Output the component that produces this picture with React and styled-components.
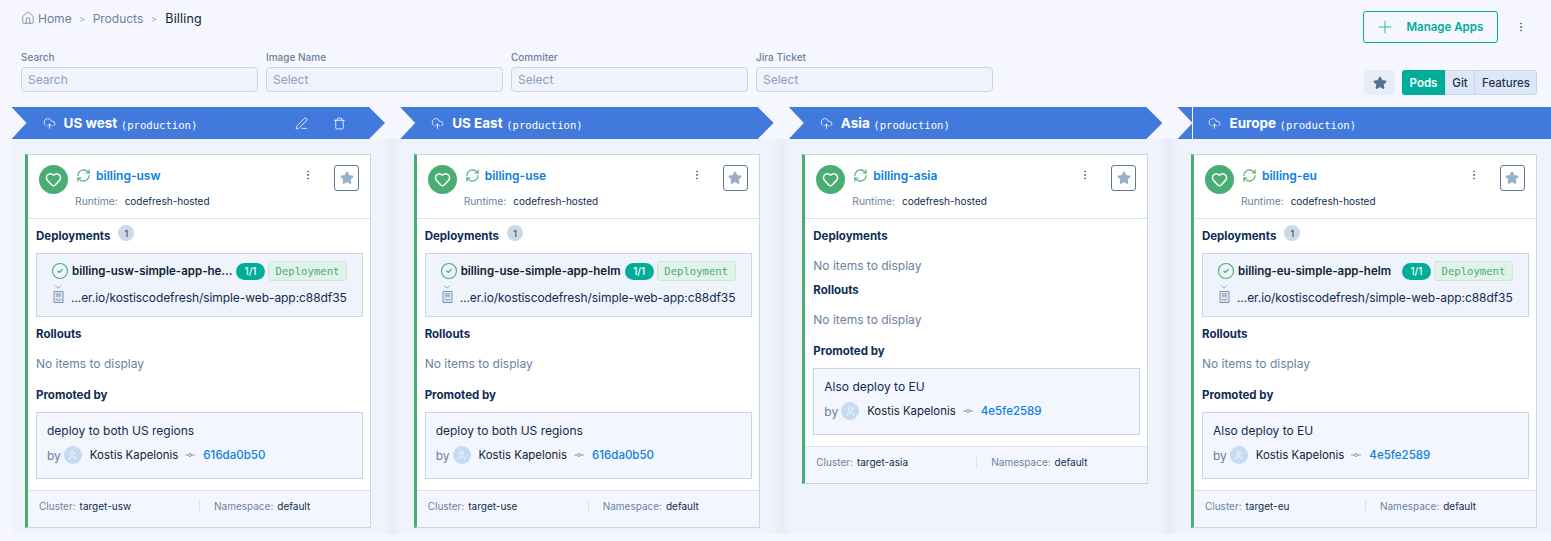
import { Fragment } from "react";
import styled, { createGlobalStyle } from "styled-components";
import {
  ChevronDown,
  CircleCheck,
  CloudUpload,
  EllipsisVertical,
  GitCommitHorizontal,
  Heart,
  House,
  PenLine,
  Plus,
  RefreshCw,
  Star,
  Trash,
  User,
} from "lucide-react";

const GlobalStyle = createGlobalStyle`
  * {
    box-sizing: border-box;
  }
  html, body {
    margin: 0;
    padding: 0;
    background: #ffffff;
    overflow: hidden;
  }
  body {
    font-family: Inter, "Noto Sans", "Liberation Sans", sans-serif;
    font-size: 12px;
    color: #0f2b4f;
  }
`;

const Page = styled.div`
  width: 1551px;
  height: 541px;
  overflow: hidden;
  background: #f6f7fe;
`;

const Top = styled.div`
  margin-left: 8px;
  height: 97px;
  padding: 0 14px 2px 13px;
  background: #f6f7fe;
`;

const TopBar = styled.div`
  display: flex;
  justify-content: space-between;
  align-items: flex-start;
  height: 43px;
`;

const Crumbs = styled.div`
  display: flex;
  align-items: center;
  height: 20px;
  margin-top: 8px;
  color: #5f7591;
`;

const Crumb = styled.span`
  color: ${(props) => (props.$current ? "#0f2238" : "#6b829e")};
  font-size: ${(props) => (props.$current ? 12.5 : 12)}px;
  letter-spacing: ${(props) => (props.$current ? 0.2 : 0)}px;
  margin-left: ${(props) => (props.$first ? 3 : props.$current ? 1 : 0)}px;
`;

const CrumbSep = styled.span`
  width: 21px;
  text-align: center;
  font-size: 9px;
  color: #9aabc0;
`;

const TopActions = styled.div`
  display: flex;
  align-items: center;
  margin-top: 11px;
`;

const ManageButton = styled.button`
  display: flex;
  align-items: center;
  width: 135px;
  height: 32px;
  padding: 0 0 0 10.5px;
  background: transparent;
  border: 1.5px solid #00ad98;
  border-radius: 3px;
  color: #00ad98;
  font: 600 11.5px Inter, sans-serif;

  span {
    margin-left: 12px;
  }
`;

const DotsButton = styled.div`
  display: flex;
  width: 12px;
  justify-content: center;
  color: #4d617c;
`;

const TopDots = styled(DotsButton)`
  margin: 0 10px 0 17px;
`;

const FilterRow = styled.div`
  display: flex;
  justify-content: space-between;
  align-items: flex-end;
  margin-top: 8px;
`;

const Filters = styled.div`
  display: flex;
  gap: 8px;
  margin-bottom: 3px;
`;

const Field = styled.label`
  display: block;
  width: 237px;
`;

const FieldLabel = styled.div`
  height: 13px;
  line-height: 13px;
  margin-bottom: 3px;
  font-size: 10px;
  font-weight: 500;
  color: #6b829e;
`;

const FieldInput = styled.div`
  height: 25px;
  line-height: 23px;
  padding-left: 6px;
  background: #eef3fd;
  border: 1px solid #c9d5e8;
  border-radius: 4px;
  color: #8ea0b8;
`;

const ViewControls = styled.div`
  display: flex;
`;

const StarToggle = styled.div`
  display: flex;
  align-items: center;
  justify-content: center;
  width: 31px;
  height: 25px;
  margin-right: 7px;
  background: #e8eef8;
  border-radius: 3px;
  color: #55708f;
`;

const Segments = styled.div`
  display: flex;
  height: 25px;
  border-radius: 3px;
  overflow: hidden;
  background: #dde7f5;
  box-shadow: inset 0 0 0 1px #ccd8ea;
`;

const Segment = styled.div`
  display: flex;
  align-items: center;
  justify-content: center;
  width: ${(props) => props.$width}px;
  font-size: 11.5px;
  font-weight: ${(props) => (props.$active ? 600 : 500)};
  color: ${(props) => (props.$active ? "#ffffff" : "#1f3450")};
  background: ${(props) => (props.$active ? "#00ad98" : "transparent")};
  & + & {
    border-left: 1px solid #ccd8ea;
  }
`;

const Board = styled.div`
  display: flex;
  margin: 10px 0 0 11.5px;
  height: 427px;
`;

const Column = styled.section`
  flex: ${(props) => (props.$last ? "1" : "none")};
  width: 373.5px;
`;

const Gutter = styled.div`
  flex: none;
  width: 15.17px;
  margin-top: 32px;
  background: linear-gradient(90deg, #eef1fa, #e9ecf6 50%, #eef1fa);
`;

const Band = styled.header`
  position: relative;
  display: flex;
  align-items: center;
  height: 32px;
  padding: 0 39px 0 31px;
  background: #417adc;
  color: #ffffff;
  clip-path: ${(props) =>
    props.$last
      ? "polygon(0 0, 100% 0, 100% 100%, 0 100%, 15px 50%)"
      : "polygon(0 0, calc(100% - 16px) 0, 100% 50%, calc(100% - 16px) 100%, 0 100%, 15px 50%)"};

  ${(props) =>
    props.$last &&
    `
    &::before {
      content: "";
      position: absolute;
      left: 15px;
      top: 0;
      bottom: 0;
      width: 1px;
      background: #f6f7fe;
    }
  `}
`;

const BandTitle = styled.strong`
  margin-left: 8px;
  font-size: 13.5px;
  font-weight: 700;
`;

const BandEnv = styled.span`
  margin: 3px 0 0 3.5px;
  font-family: "DejaVu Sans Mono", "Liberation Mono", monospace;
  font-size: 10.6px;
`;

const BandActions = styled.div`
  display: flex;
  gap: 25px;
  margin-left: auto;
`;

const ColumnBody = styled.div`
  height: 395px;
  padding: 15px 14px 0 13.5px;
  background: #eff3fc;
`;

const Card = styled.article`
  width: 346px;
  background: #ffffff;
  border: 1px solid #c9d5e8;
  border-left: 3px solid #4aae74;
`;

const CardHead = styled.div`
  display: flex;
  height: 64px;
  padding: 10px 11px 0 11px;
  border-bottom: 1px solid #d9e2f0;
`;

const HealthIcon = styled.div`
  display: flex;
  flex: none;
  align-items: center;
  justify-content: center;
  width: 29px;
  height: 29px;
  border-radius: 50%;
  background: #4aae74;
  color: #ffffff;
`;

const AppInfo = styled.div`
  flex: 1;
  margin-left: 7px;
`;

const AppRow = styled.div`
  display: flex;
  align-items: center;
  height: 20px;
  margin-left: 1px;
  color: #4aae74;
`;

const AppName = styled.a`
  margin-left: 5px;
  font-weight: 600;
  color: #0b7fe0;
`;

const Meta = styled.div`
  margin-top: 9px;
  font-size: 10px;
  line-height: 14px;
`;

const MetaKey = styled.span`
  color: #6b829e;
  font-size: 10.3px;
  margin-right: 7px;
`;

const FootKey = styled(MetaKey)`
  font-size: 10px;
  margin-right: 4px;
`;

const CardDots = styled(DotsButton)`
  margin: 4px 20px 0 0;
`;

const StarButton = styled.div`
  display: flex;
  flex: none;
  align-items: center;
  justify-content: center;
  width: 25px;
  height: 26px;
  border: 1px solid #5d7896;
  border-radius: 3px;
  color: #9aaec6;
`;

const CardBody = styled.div`
  padding: 6px 7px 11px 8px;
`;

const HeadingRow = styled.div`
  display: flex;
  align-items: center;
  height: 20px;
`;

const Heading = styled.h4`
  margin: 0;
  padding-top: 2px;
  font-size: 11.5px;
  font-weight: 700;
  color: #0d2c54;
`;

const CountBadge = styled.span`
  display: flex;
  align-items: center;
  justify-content: center;
  width: 16px;
  height: 16px;
  margin: -4px 0 0 8px;
  border-radius: 50%;
  background: #cdd8e8;
  font-size: 9px;
  font-weight: 500;
  color: #40566f;
`;

const EmptyNote = styled.div`
  margin: 11px 0 3px;
  line-height: 20px;
  color: #6b829e;
`;

const DeployBox = styled.div`
  height: 64px;
  margin: 8px 0 6px;
  padding: 8px 0 0 14px;
  background: #eff3fc;
  border: 1px solid #c9d5e8;
`;

const DeployRow = styled.div`
  display: flex;
  align-items: center;
  height: 18px;
  color: #4aae74;
`;

const DeployName = styled.div`
  width: 161px;
  margin-left: 3px;
  white-space: nowrap;
  font-size: 11.5px;
  font-weight: 600;
  color: #0f2238;
`;

const Pill = styled.span`
  display: flex;
  flex: none;
  align-items: center;
  justify-content: center;
  width: 29px;
  height: 17px;
  margin-left: 3px;
  border-radius: 9px;
  background: #00ad98;
  color: #ffffff;
  font-size: 10px;
  font-weight: 500;
`;

const KindTag = styled.span`
  display: flex;
  flex: none;
  align-items: center;
  justify-content: center;
  width: 79px;
  height: 20px;
  margin-left: 3px;
  border: 1px solid #cfe6d8;
  border-radius: 3px;
  background: #e1f3e8;
  color: #4aae74;
  font-family: "DejaVu Sans Mono", "Liberation Mono", monospace;
  font-size: 10.6px;
`;

const ExpandMark = styled.div`
  display: flex;
  width: 14px;
  height: 8px;
  margin-top: 3px;
  justify-content: center;
  align-items: center;
  color: #7d93ae;
`;

const ImageRow = styled.div`
  display: flex;
  align-items: center;
  height: 16px;
  margin-top: -2px;
  padding-left: 2px;
`;

const ImageName = styled.span`
  margin-left: 7px;
  white-space: nowrap;
  letter-spacing: -0.07px;
  color: #0f2b4f;
`;

const PromoSection = styled.div`
  margin-top: 10px;
`;

const PromoBox = styled.div`
  height: 67px;
  margin-top: 8px;
  padding: 9px 10px 0;
  background: #f3f6fe;
  border: 1px solid #c9d5e8;
`;

const PromoTitle = styled.div`
  line-height: 18px;
`;

const PromoBy = styled.div`
  display: flex;
  align-items: center;
  height: 20px;
  margin-top: 5px;
`;

const ByLabel = styled.span`
  color: #6b829e;
`;

const Avatar = styled.span`
  display: flex;
  align-items: center;
  justify-content: center;
  width: 18px;
  height: 18px;
  margin: 0 8px 0 3px;
  border-radius: 50%;
  background: #c4dcf2;
  color: #f2f7fd;
`;

const Author = styled.span`
  font-size: 11.4px;
  color: #0f2238;
`;

const CommitMark = styled.span`
  display: flex;
  margin: 0 7px 0 6px;
  color: #8a9cb3;
`;

const CommitLink = styled.a`
  color: #0b7fe0;
  font-size: 11.5px;
  font-weight: 500;
`;

const CardFoot = styled.div`
  display: flex;
  align-items: center;
  height: 37px;
  padding: 0 0 6px 11px;
  background: #f3f6fe;
  border-top: 1px solid #d9e2f0;
  font-size: 10px;
`;

const FootCell = styled.div`
  width: ${(props) => props.$width}px;
`;

const FootDivider = styled.div`
  width: 1px;
  height: 12px;
  margin-right: 14px;
  background: #d9e2f0;
`;

const DocIcon = () => (
  <svg width="11" height="12" viewBox="0 0 11 12" fill="none" stroke="#7d93ae" strokeWidth="1">
    <path d="M1 .5h9v11H1z" fill="#dbe4f1" />
    <path d="M3 3h5M3 5h5" />
    <path d="M3 8l2.5 1.5L8 8" />
  </svg>
);

const regions = [
  {
    title: "US west",
    app: "billing-usw",
    cluster: "target-usw",
    deployment: "billing-usw-simple-app-he...",
    promo: "deploy to both US regions",
    sha: "616da0b50",
    editable: true,
  },
  {
    title: "US East",
    app: "billing-use",
    cluster: "target-use",
    deployment: "billing-use-simple-app-helm",
    promo: "deploy to both US regions",
    sha: "616da0b50",
  },
  {
    title: "Asia",
    app: "billing-asia",
    cluster: "target-asia",
    promo: "Also deploy to EU",
    sha: "4e5fe2589",
  },
  {
    title: "Europe",
    app: "billing-eu",
    cluster: "target-eu",
    deployment: "billing-eu-simple-app-helm",
    promo: "Also deploy to EU",
    sha: "4e5fe2589",
    last: true,
  },
];

function AppCard({ region }) {
  return (
    <Card>
      <CardHead>
        <HealthIcon>
          <Heart size={17} strokeWidth={2} />
        </HealthIcon>
        <AppInfo>
          <AppRow>
            <RefreshCw size={15} strokeWidth={1.75} />
            <AppName>{region.app}</AppName>
          </AppRow>
          <Meta>
            <MetaKey>Runtime:</MetaKey>
            codefresh-hosted
          </Meta>
        </AppInfo>
        <CardDots>
          <EllipsisVertical size={12} />
        </CardDots>
        <StarButton>
          <Star size={14} fill="currentColor" />
        </StarButton>
      </CardHead>
      <CardBody>
        <HeadingRow>
          <Heading>Deployments</Heading>
          {region.deployment && <CountBadge>1</CountBadge>}
        </HeadingRow>
        {region.deployment ? (
          <DeployBox>
            <DeployRow>
              <CircleCheck size={18} strokeWidth={1.5} />
              <DeployName>{region.deployment}</DeployName>
              <Pill>1/1</Pill>
              <KindTag>Deployment</KindTag>
            </DeployRow>
            <ExpandMark>
              <ChevronDown size={10} />
            </ExpandMark>
            <ImageRow>
              <DocIcon />
              <ImageName>...er.io/kostiscodefresh/simple-web-app:c88df35</ImageName>
            </ImageRow>
          </DeployBox>
        ) : (
          <EmptyNote>No items to display</EmptyNote>
        )}
        <HeadingRow>
          <Heading>Rollouts</Heading>
        </HeadingRow>
        <EmptyNote>No items to display</EmptyNote>
        <PromoSection>
          <HeadingRow>
            <Heading>Promoted by</Heading>
          </HeadingRow>
          <PromoBox>
            <PromoTitle>{region.promo}</PromoTitle>
            <PromoBy>
              <ByLabel>by</ByLabel>
              <Avatar>
                <User size={11} />
              </Avatar>
              <Author>Kostis Kapelonis</Author>
              <CommitMark>
                <GitCommitHorizontal size={12} />
              </CommitMark>
              <CommitLink>{region.sha}</CommitLink>
            </PromoBy>
          </PromoBox>
        </PromoSection>
      </CardBody>
      <CardFoot>
        <FootCell $width={160}>
          <FootKey>Cluster:</FootKey>
          {region.cluster}
        </FootCell>
        <FootDivider />
        <FootCell>
          <FootKey>Namespace:</FootKey>
          default
        </FootCell>
      </CardFoot>
    </Card>
  );
}

export default function App() {
  return (
    <Page>
      <GlobalStyle />
      <Top>
        <TopBar>
          <Crumbs>
            <House size={14} strokeWidth={1.25} />
            <Crumb $first>Home</Crumb>
            <CrumbSep>&gt;</CrumbSep>
            <Crumb>Products</Crumb>
            <CrumbSep>&gt;</CrumbSep>
            <Crumb $current>Billing</Crumb>
          </Crumbs>
          <TopActions>
            <ManageButton>
              <Plus size={20} strokeWidth={1} />
              <span>Manage Apps</span>
            </ManageButton>
            <TopDots>
              <EllipsisVertical size={12} />
            </TopDots>
          </TopActions>
        </TopBar>
        <FilterRow>
          <Filters>
            <Field>
              <FieldLabel>Search</FieldLabel>
              <FieldInput>Search</FieldInput>
            </Field>
            <Field>
              <FieldLabel>Image Name</FieldLabel>
              <FieldInput>Select</FieldInput>
            </Field>
            <Field>
              <FieldLabel>Commiter</FieldLabel>
              <FieldInput>Select</FieldInput>
            </Field>
            <Field>
              <FieldLabel>Jira Ticket</FieldLabel>
              <FieldInput>Select</FieldInput>
            </Field>
          </Filters>
          <ViewControls>
            <StarToggle>
              <Star size={14} fill="currentColor" />
            </StarToggle>
            <Segments>
              <Segment $width={43} $active>
                Pods
              </Segment>
              <Segment $width={29}>Git</Segment>
              <Segment $width={63}>Features</Segment>
            </Segments>
          </ViewControls>
        </FilterRow>
      </Top>
      <Board>
        {regions.map((region) => (
          <Fragment key={region.title}>
            <Column $last={region.last}>
              <Band $last={region.last}>
                <CloudUpload size={13} strokeWidth={1.5} />
                <BandTitle>{region.title}</BandTitle>
                <BandEnv>(production)</BandEnv>
                {region.editable && (
                  <BandActions>
                    <PenLine size={13} strokeWidth={1.5} />
                    <Trash size={13} strokeWidth={1.5} />
                  </BandActions>
                )}
              </Band>
              <ColumnBody>
                <AppCard region={region} />
              </ColumnBody>
            </Column>
            {!region.last && <Gutter />}
          </Fragment>
        ))}
      </Board>
    </Page>
  );
}
